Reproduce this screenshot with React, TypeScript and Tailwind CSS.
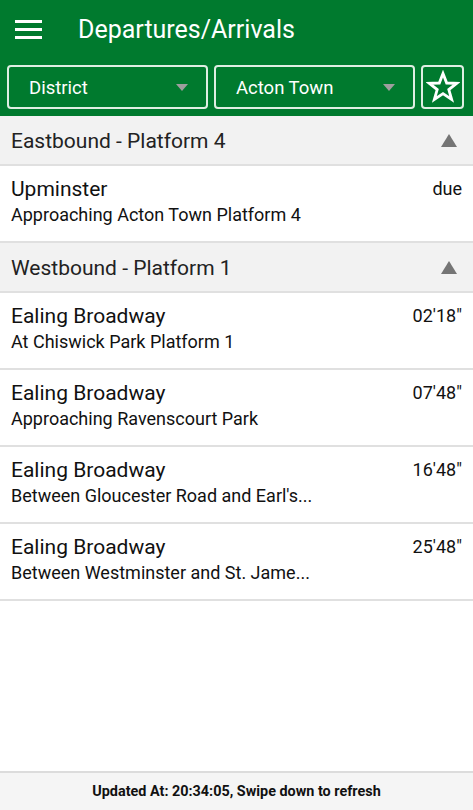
import { useState } from "react"

type Row = { dest: string; info: string; time: string }
type Section = { title: string; rows: Row[] }

const sections: Section[] = [
  {
    title: "Eastbound - Platform 4",
    rows: [{ dest: "Upminster", info: "Approaching Acton Town Platform 4", time: "due" }],
  },
  {
    title: "Westbound - Platform 1",
    rows: [
      { dest: "Ealing Broadway", info: "At Chiswick Park Platform 1", time: "02'18\"" },
      { dest: "Ealing Broadway", info: "Approaching Ravenscourt Park", time: "07'48\"" },
      { dest: "Ealing Broadway", info: "Between Gloucester Road and Earl's...", time: "16'48\"" },
      { dest: "Ealing Broadway", info: "Between Westminster and St. Jame...", time: "25'48\"" },
    ],
  },
]

function Dropdown({ label }: { label: string }) {
  return (
    <div className="flex-1 h-[44px] border-2 border-[#dfeee3] rounded-[4px] flex items-center justify-between pl-[20px] pr-[18px] pt-[3px]">
      <span className="text-[18.5px] leading-none text-white">{label}</span>
      <svg width="12" height="7" viewBox="0 0 12 7" className="-mt-[3px]">
        <polygon points="0,0 12,0 6,7" fill="#9e9e9e" />
      </svg>
    </div>
  )
}

export default function App() {
  const [open] = useState<Record<string, boolean>>({})

  return (
    <div className="w-[473px] h-[810px] flex flex-col bg-white font-['Roboto',sans-serif] text-[#1a1a1a]">
      {/* green header */}
      <div className="bg-[#007a2e] pb-[7px]">
        <div className="h-[58px] flex items-center pl-[15px] pt-[1px]">
          <div className="flex flex-col gap-[5px] w-[27px]">
            <div className="h-[3px] bg-white" />
            <div className="h-[3px] bg-white" />
            <div className="h-[3px] bg-white" />
          </div>
          <span className="ml-[36px] text-[25px] text-white leading-none">Departures/Arrivals</span>
        </div>
        <div className="flex gap-[6px] px-[7px] mt-[7px] pr-[9px]">
          <Dropdown label="District" />
          <Dropdown label="Acton Town" />
          <div className="w-[43px] h-[44px] border-2 border-[#dfeee3] rounded-[4px] flex items-center justify-center">
            <svg width="34" height="34" viewBox="0 0 24 24" fill="none" stroke="white" strokeWidth="2" strokeLinejoin="miter">
              <polygon points="12,2.5 14.6,9.2 21.6,9.4 16.1,13.8 18.1,20.8 12,16.7 5.9,20.8 7.9,13.8 2.4,9.4 9.4,9.2" />
            </svg>
          </div>
        </div>
      </div>

      {/* list */}
      <div className="flex-1 flex flex-col">
        {sections.map((s) => (
          <div key={s.title} className="flex flex-col">
            <div className="h-[50px] bg-[#f2f2f2] border-b-2 border-[#e0e0e0] flex items-center justify-between pl-[11px] pr-[16px]">
              <span className="text-[21px] text-[#222] pt-[3px]">{s.title}</span>
              {!open[s.title] && (
                <svg width="16" height="13" viewBox="0 0 16 13">
                  <polygon points="8,0 16,13 0,13" fill="#757575" />
                </svg>
              )}
            </div>
            {s.rows.map((r, i) => (
              <div key={i} className="h-[77px] border-b-2 border-[#e0e0e0] flex justify-between pl-[11px] pr-[11px] pt-[10px]">
                <div className="flex flex-col">
                  <span className="text-[21px] leading-[27px] text-[#111]">{r.dest}</span>
                  <span className="text-[18px] leading-[24px] text-[#111]">{r.info}</span>
                </div>
                <span className="text-[18px] leading-[26px] text-[#111]">{r.time}</span>
              </div>
            ))}
          </div>
        ))}
      </div>

      {/* footer */}
      <div className="h-[39px] border-t-2 border-[#dcdcdc] bg-[#f5f5f5] flex items-center justify-center">
        <span className="text-[14.4px] font-bold text-[#111]">Updated At: 20:34:05, Swipe down to refresh</span>
      </div>
    </div>
  )
}
